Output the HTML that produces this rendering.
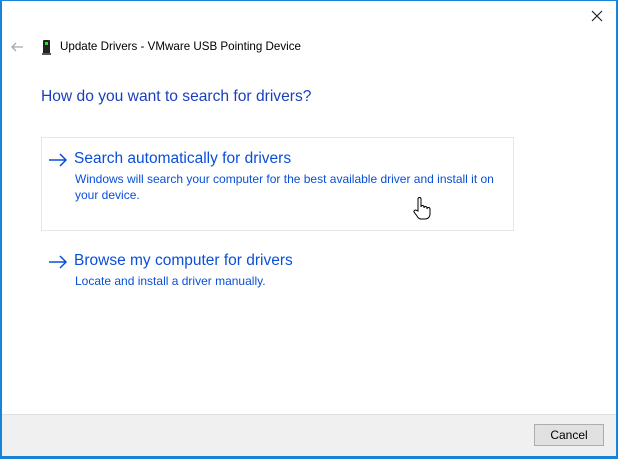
<!DOCTYPE html>
<html><head><meta charset="utf-8"><style>
*{margin:0;padding:0;box-sizing:border-box}
body{width:618px;height:459px;overflow:hidden;background:#fff;font-family:"Segoe UI","Liberation Sans",sans-serif;position:relative}
.frame{position:absolute;left:0;top:0;width:618px;height:459px;border:1px solid #1883d7;border-left-width:2px;border-right-width:2px;border-bottom-width:3px;border-top-width:1px;border-color:#1883d7}
.t{position:absolute;white-space:nowrap}
.footer{position:absolute;left:2px;right:2px;top:414px;bottom:3px;background:#f0f0f0;border-top:1px solid #dfdfdf}
.btn{position:absolute;left:534px;top:424px;width:70px;height:22px;background:#e1e1e1;border:1px solid #adadad;font-size:12px;text-align:center;line-height:20px;color:#000}
.box{position:absolute;left:41px;top:137px;width:473px;height:94px;border:1px solid #e6e6e6}
.big{font-size:15.5px;color:#0a4fd8}
.small{font-size:12px;color:#0a4fd8;line-height:16px}
</style></head><body>
<div class="frame"></div>
<svg class="t" style="left:591px;top:10px" width="12" height="12" viewBox="0 0 12 12"><path d="M1 1L11 11M11 1L1 11" stroke="#222" stroke-width="1.2"/></svg>
<svg class="t" style="left:10px;top:42px" width="14" height="10" viewBox="0 0 14 10"><path d="M13 5H2M6 1L2 5L6 9" stroke="#a8a8a8" stroke-width="1.3" fill="none"/></svg>
<div class="t" style="left:43px;top:40px;width:7px;height:14px;background:#222;border-radius:1px"></div>
<div class="t" style="left:45px;top:42px;width:3px;height:3px;background:#2ee02e"></div>
<div class="t" style="left:42px;top:53px;width:9px;height:2px;background:#555"></div>
<div class="t" style="left:60px;top:40px;font-size:11.6px;color:#000">Update Drivers - VMware USB Pointing Device</div>
<div class="t" style="left:41px;top:88px;font-size:15.6px;color:#1a3fbd">How do you want to search for drivers?</div>
<div class="box"></div>
<svg class="t" style="left:48px;top:153px" width="20" height="14" viewBox="0 0 20 14"><path d="M1 7H18M12 1L18 7L12 13" stroke="#0a4fd8" stroke-width="1.5" fill="none"/></svg>
<div class="t big" style="left:74px;top:150px">Search automatically for drivers</div>
<div class="t small" style="left:75px;top:171px">Windows will search your computer for the best available driver and install it on<br>your device.</div>
<svg class="t" style="left:48px;top:255px" width="20" height="14" viewBox="0 0 20 14"><path d="M1 7H18M12 1L18 7L12 13" stroke="#0a4fd8" stroke-width="1.5" fill="none"/></svg>
<div class="t big" style="left:74px;top:252px">Browse my computer for drivers</div>
<div class="t small" style="left:75px;top:273px">Locate and install a driver manually.</div>
<svg class="t" style="left:413px;top:196px" width="18" height="26" viewBox="0 0 18 26"><path d="M5 15V3a1.5 1.5 0 0 1 3 0v8a1.5 1.5 0 0 1 3 0v1a1.5 1.5 0 0 1 3 0v1a1.5 1.5 0 0 1 3 0v5c0 3-2 5-5 5H8c-2 0-3-1-4-3L1 16a1.5 1.5 0 0 1 2.5-1.5z" fill="#fff" stroke="#000" stroke-width="1"/></svg>
<div class="footer"></div>
<div class="btn">Cancel</div>
</body></html>
